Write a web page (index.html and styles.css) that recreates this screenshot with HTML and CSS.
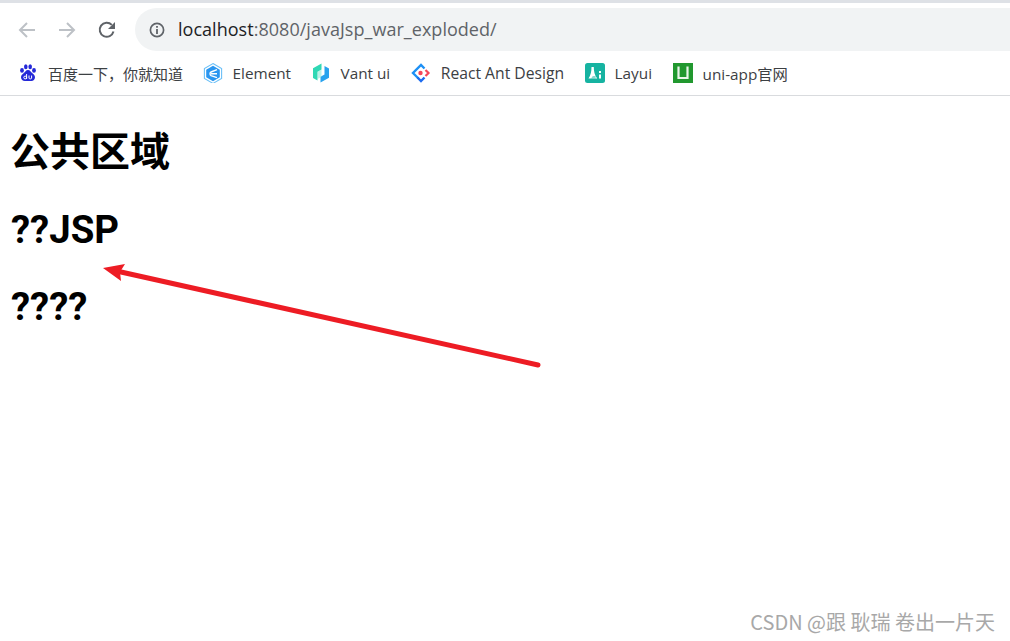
FILE: index.html
```html
<!DOCTYPE html>
<html lang="zh">
<head>
<meta charset="utf-8">
<title>javaJsp</title>
<link rel="stylesheet" href="styles.css">
</head>
<body>
<header class="chrome">
  <div class="toolbar">
    <svg class="nav" width="20" height="20" viewBox="0 0 20 20"><path d="M18 10H3M10 3l-7 7 7 7" fill="none" stroke="#bdc1c6" stroke-width="2"/></svg>
    <svg class="nav" width="20" height="20" viewBox="0 0 20 20"><path d="M2 10h15M10 3l7 7-7 7" fill="none" stroke="#bdc1c6" stroke-width="2"/></svg>
    <svg class="nav" width="20" height="20" viewBox="0 0 20 20"><path d="M16.500 11.500A7 7 0 1 1 14.800 4.900" fill="none" stroke="#5f6368" stroke-width="2"/><path d="M18 2v7h-7z" fill="#5f6368"/></svg>
    <div class="omnibox">
      <svg class="info" width="18" height="18" viewBox="0 0 18 18"><circle cx="9" cy="9" r="6.600" fill="none" stroke="#5f6368" stroke-width="1.700"/><path d="M8.100 8h1.800v5H8.100zM8.100 5h1.800v1.800H8.100z" fill="#5f6368"/></svg>
      <span class="url"><span class="host">localhost</span>:8080/javaJsp_war_exploded/</span>
    </div>
  </div>
  <nav class="bookmarks">
    <a class="mark mark-first">
      <svg width="19" height="18" viewBox="0 0 19 18"><g fill="#2529d8"><ellipse cx="3" cy="6.400" rx="1.900" ry="2.400"/><ellipse cx="6.800" cy="2.800" rx="1.800" ry="2.500"/><ellipse cx="11.200" cy="2.800" rx="1.800" ry="2.500"/><ellipse cx="15" cy="6.400" rx="1.900" ry="2.400"/><path d="M9 6c2.200 0 2.800 2 4.400 3.200 1.800 1.300 2.600 2.500 2.600 4.100 0 2.300-1.700 3.700-3.600 3.700H5.800C3.800 17 2 15.600 2 13.300c0-1.700 1-2.900 2.600-4.100C6.200 8 6.800 6 9 6z"/></g><path d="M7.600 10v5M10 11.500v2.600c0 1.100 2.600 1.100 2.600 0v-2.600" fill="none" stroke="#fff" stroke-width="1"/><circle cx="6.200" cy="13.500" r="1.400" fill="none" stroke="#fff" stroke-width="1"/></svg>
      <span class="label label-cjk">百度一下，你就知道</span>
    </a>
    <a class="mark">
      <svg width="20" height="20" viewBox="0 0 20 20"><path d="M10 .6l8.600 5v9.800l-8.600 5-8.600-5V5.600z" fill="none" stroke="#6cc0f7" stroke-width="1.100"/><path d="M10 2.800l6.800 3.900v7.600L10 18.200l-6.800-3.900V6.700z" fill="#2a96f0"/><path d="M14 6.600L8 9c-1.300.6-1.300 3 0 3.600l6 2M8 10.800h6" fill="none" stroke="#fff" stroke-width="1.400"/></svg>
      <span class="label">Element</span>
    </a>
    <a class="mark">
      <svg width="19" height="20" viewBox="0 0 19 20"><path d="M9.500 .5L1 5.200v9.800l4.500 2.500V8.800L9.500 6.600z" fill="#2fd8b4"/><path d="M17 5.400l-4.500-2.500v8.600l-4 2.300v5.700L17 14.800z" fill="#27a2ee"/><path d="M5.500 8.800l4-2.200v7.200l-4 2.300z" fill="#7be3cf" opacity=".5"/></svg>
      <span class="label">Vant ui</span>
    </a>
    <a class="mark">
      <svg width="20" height="20" viewBox="0 0 20 20"><path d="M7.500 15.500L2 10l8-8 3.500 3.500" fill="none" stroke="#1d90f5" stroke-width="2.400"/><path d="M13.500 14.500L10 18l-3.500-3.500" fill="none" stroke="#1d6cf0" stroke-width="2.400"/><path d="M14.500 7l3 3-3 3" fill="none" stroke="#f5475b" stroke-width="2.200"/><circle cx="9.500" cy="10" r="2.200" fill="#f5475b"/></svg>
      <span class="label label-wide">React Ant Design</span>
    </a>
    <a class="mark">
      <svg width="20" height="20" viewBox="0 0 20 20"><rect width="20" height="20" rx="2.500" fill="#16b3a1"/><path d="M6.500 4h2.300c.1 4.500.6 7.500 3.400 11.500H3.500C5.700 12 6.400 9 6.500 4z" fill="#fff"/><path d="M7.800 13h2.800v2.500H6z" fill="#16b3a1" opacity=".5"/><path d="M14 8h2v2h-2zM14 11.500h2v4h-2z" fill="#fff"/></svg>
      <span class="label">Layui</span>
    </a>
    <a class="mark">
      <svg width="20" height="20" viewBox="0 0 20 20"><rect width="20" height="20" fill="#21982f"/><path d="M5.500 3.500v11.500h9V3.500" fill="none" stroke="#e9f5ea" stroke-width="2.200"/><path d="M9.500 4v7" fill="none" stroke="#21982f" stroke-width="1"/></svg>
      <span class="label">uni-app官网</span>
    </a>
  </nav>
</header>
<main class="content">
  <h1 class="cjk">公共区域</h1>
  <h1 class="latin">??JSP</h1>
  <h1 class="latin">????</h1>
</main>
<svg class="arrow" width="450" height="110" viewBox="0 0 450 110"><path d="M435 102L18 9" fill="none" stroke="#ed1c24" stroke-width="5" stroke-linecap="round"/><path d="M0 5L22 1 17 9 18 18z" fill="#ed1c24"/></svg>
<div class="watermark">CSDN @跟 耿瑞 卷出一片天</div>
</body>
</html>
```

FILE: styles.css
```css
* { box-sizing: border-box; }
html, body { margin: 0; height: 100%; }
body {
  position: relative;
  overflow: hidden;
  width: 1010px;
  height: 641px;
  background: #fff;
  font-family: "Noto Sans CJK SC", "Noto Sans", sans-serif;
}
.chrome {
  height: 96px;
  border-top: 3px solid #dee1e6;
  border-bottom: 1px solid #d9dbde;
  background: #fff;
}
.toolbar {
  display: flex;
  align-items: center;
  height: 48px;
  padding: 5px 0 0 17px;
  gap: 20px;
}
.nav { flex: none; }
.omnibox {
  flex: 1;
  display: flex;
  align-items: center;
  height: 43px;
  margin-left: -2px;
  padding-left: 13px;
  gap: 12px;
  border-radius: 22px 0 0 22px;
  background: #f1f3f4;
}
.info { flex: none; }
.url {
  position: relative;
  top: -1px;
  font-family: "Open Sans", "Noto Sans", sans-serif;
  font-size: 18px;
  letter-spacing: 0.03px;
  color: #5f6368;
}
.host { color: #202124; }
.bookmarks {
  display: flex;
  align-items: center;
  height: 44px;
  padding-left: 19px;
}
.mark {
  display: flex;
  align-items: center;
  gap: 10px;
  margin-right: 20.500px;
}
.mark-first { margin-right: 19.500px; }
.label {
  font-family: "Open Sans", "Noto Sans CJK SC", sans-serif;
  font-size: 15.300px;
  color: #3c4043;
  white-space: nowrap;
}
.label-cjk { font-size: 15px; }
.label-wide { font-size: 15.700px; }
.content { padding: 18px 11px 0; }
h1 {
  margin: 0;
  height: 77.500px;
  font-family: Roboto, "Noto Sans CJK SC", sans-serif;
  font-size: 40px;
  line-height: 77px;
  font-weight: 700;
  color: #000;
}
h1.cjk { margin-left: -1px; }
h1.latin { font-size: 38.400px; line-height: 75px; }
.arrow {
  position: absolute;
  left: 103px;
  top: 263px;
  overflow: visible;
}
.watermark {
  position: absolute;
  right: 15px;
  top: 610px;
  font-family: "Noto Sans CJK SC", sans-serif;
  font-size: 20px;
  line-height: 24px;
  color: #a8a8a8;
  white-space: nowrap;
}
```
